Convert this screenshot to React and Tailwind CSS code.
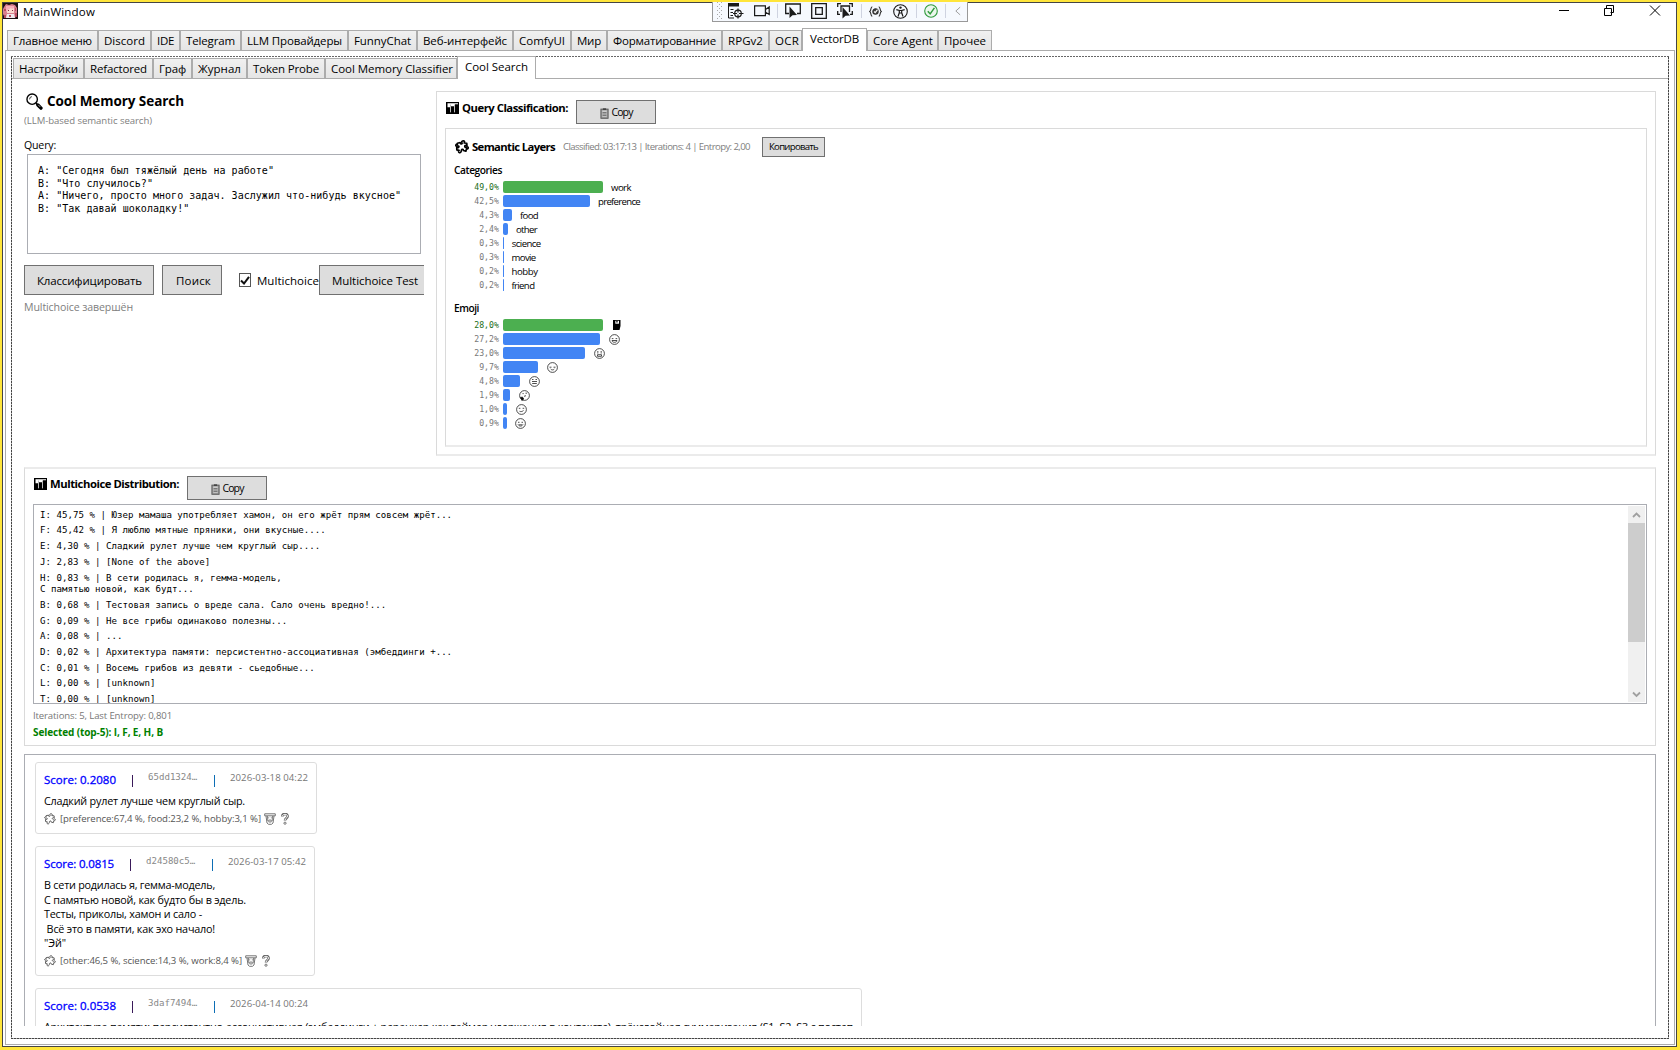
import { useLayoutEffect, useRef } from "react";

/* Text line that spreads its letters so that it fills exactly w pixels. */
function Fit({ w, className = "", children }) {
  const ref = useRef(null);
  useLayoutEffect(() => {
    const el = ref.current;
    el.style.letterSpacing = "0px";
    const natural = el.getBoundingClientRect().width;
    const n = el.textContent.length;
    el.style.letterSpacing = `${(w - natural) / n}px`;
  }, [w, children]);
  return (
    <span className={`shrink-0 block whitespace-pre ${className}`} style={{ width: w }}>
      <span ref={ref} className="inline-block">{children}</span>
    </span>
  );
}

const MONO = "font-['DejaVu_Sans_Mono',monospace]";

function AppIcon() {
  return (
    <svg width="15" height="16" viewBox="0 0 15 16">
      <rect width="15" height="16" fill="#1b1012" />
      <path d="M1 4 3 1l3 1 3-1 3 1 2 3v7l-2 3H2L0 11V6z" fill="#d9808f" />
      <path d="M4 5h7v5H4z" fill="#fbd9cf" />
      <path d="M3 3h8v2l-2 1-1-1-3 2-2 2z" fill="#f6adb8" />
      <path d="M5 7h1v1H5zM9 7h1v1H9z" fill="#7c2b3e" />
      <path d="M4 11h7l1 4H3z" fill="#efe9ee" />
      <path d="M6 12h2v2H6zM1 12h2v3H1zM12 10h2v4h-2zM1 6h2v2H1zM12 5h1v3h-1z" fill="#b84b60" />
    </svg>
  );
}

function SearchIcon() {
  return (
    <svg width="17" height="17" viewBox="0 0 16 16" fill="none" stroke="#000">
      <circle cx="5.800" cy="5.800" r="4.900" strokeWidth="1.300" />
      <path d="M3.400 6a2.400 2.400 0 0 1 2.200-2.600" strokeWidth=".7" />
      <path d="m9.300 9.500 1.500 1.600" strokeWidth="1.500" />
      <path d="m11.200 11.300 2.900 2.900" strokeWidth="3.200" strokeLinecap="round" />
      <path d="m11.600 11.200 1.800 1.900" stroke="#fff" strokeWidth=".6" />
    </svg>
  );
}

function ChartIcon() {
  return (
    <svg width="13" height="12" viewBox="0 0 13 12">
      <rect width="13" height="12" fill="#000" />
      <path d="M1.500 1.200H12v1H9v8H8v-6H5v6H4v-5H1.500z" fill="#fff" />
      <path d="M4 2.500h1v7.500H4zM8 2.500h1v7.500H8z" fill="#bbb" />
    </svg>
  );
}

function ClipIcon() {
  return (
    <svg width="9" height="11" viewBox="0 0 9 11">
      <rect x=".9" y="1.100" width="7.200" height="9.200" fill="#999" stroke="#555" strokeWidth=".9" />
      <rect x="2.200" y="2.500" width="4.600" height="6.300" fill="#ccc" />
      <path d="M2.500 4.500h4M2.500 6h4M2.500 7.500h4" stroke="#555" strokeWidth=".7" />
      <rect x="2.900" y=".3" width="3.200" height="1.700" fill="#444" />
    </svg>
  );
}

function PuzzleIcon({ size, sw }) {
  return (
    <svg width={size} height={size} viewBox="0 0 14 14" fill="none" stroke="currentColor" strokeWidth={sw} strokeLinejoin="round">
      <path d="M2.400 3.200 5.200 2.500c-.2 1.700 1.600 2 2 .8C6.500 2 6.600.9 8.200.8c1.500 0 1.700 1.400.9 2.200l2.700.3.200 2.300c-1.500-.6-2.500.1-2.200 1.100.3.900 1.500.7 2.200.2 1-.2 1.500.6 1.200 1.300-.3.800-1.200.8-1.700.6l-.6 2.500-2.500-.7c.2-1.500-1.600-1.900-2-.5-.1 1.500-.7 2.900-2 2.600-1.200-.3-1.100-1.600-.3-2.300l-2.300-.5-.1-2.400c1.400.5 2.500-.2 2.200-1.100-.4-.9-1.500-.5-2.100-.2-.9.200-1.200-.6-1-1.200.3-.6 1-.7 1.600-.4z" />
    </svg>
  );
}

function BearIcon() {
  return (
    <svg width="12" height="12" viewBox="0 0 12 12" fill="none" stroke="#666" strokeWidth=".9">
      <path d="M.7.8h10.600v2H.7zM2 3l1 7 1.500 1.300h3L9 10l1-7" />
      <path d="M4.200 4.800h1M6.800 4.800h1M4.800 7h2.400v2H4.800zM3.400 3l.4 5M8.600 3l-.4 5" strokeWidth=".8" />
    </svg>
  );
}

function QuestionIcon() {
  return (
    <svg width="8" height="12" viewBox="0 0 8 12" fill="none">
      <path d="M1.300 3.600C1.300 0 6.600 0 6.600 3.200c0 2-2.600 2-2.600 4.300" stroke="#666" strokeWidth="2.600" />
      <path d="M1.300 3.200C1.700.8 6.500.7 6.500 3.200c0 1.800-2.500 2-2.500 3.900" stroke="#fff" strokeWidth="1" />
      <circle cx="4" cy="10.200" r="1.100" stroke="#666" strokeWidth=".9" />
    </svg>
  );
}

const FACES = {
  happy: "M2.800 4.600h1.600M6.600 4.600h1.600M3 6.500h5c0 2.400-5 2.400-5 0z",
  weary: "M3 3.800h1.500M6.500 3.800H8M3.300 5h1M6.700 5h1M3.500 8.300V6.700h4v1.600z",
  calm: "M2.500 5.200h2M6.500 5.200h2M3.700 7c1 1.200 2.600 1.200 3.600 0",
  grin: "M3 3.500h1.500M6.500 3.500H8M3 5.500h5M3.200 7.500h4.600",
  think: "M3.500 3.600h1.200M6.500 3.200H8M5 6.300l2-.6M2 7.500l1 2 2-1",
  smirk: "M2.800 4.300h1.600M6.600 4.300h1.600M3.500 7.300c1.500.6 3 .2 4-.8",
  smile: "M3 4.300h1.500M6.500 4.300H8M3 6.400c1 2.200 4 2.200 5 0M4 6.800h3",
};

function Face({ kind }) {
  if (kind === "disk")
    return (
      <svg width="9" height="11" viewBox="0 0 9 11">
        <path d="M1 0h7.500v6l-1 4H1z" fill="#000" />
        <path d="M3.300 .8h3.700v2.900H3.300z" fill="#fff" />
        <path d="M4.300 .8h1.300v1.700H4.300z" fill="#000" />
      </svg>
    );
  return (
    <svg width="11" height="11" viewBox="0 0 11 11" fill="none" stroke="#222" strokeWidth=".8">
      <circle cx="5.500" cy="5.500" r="4.900" />
      <path d={FACES[kind]} />
      {kind === "think" && <path d="M1.500 7.500 3.500 7l1 2-1.500 1.500z" fill="#000" />}
    </svg>
  );
}

function Sep() {
  return <span className="block h-[14px] w-px bg-[#cfd3e0]" />;
}

function DebugBar() {
  return (
    <div className="absolute left-[712px] top-0 flex h-[22px] w-[256px] items-center border border-[#999] bg-[#f6f9fe] text-[#1a1a1a]">
      <svg className="ml-[4px]" width="5" height="18" viewBox="0 0 5 18" fill="#a9a9a9">
        {[0, 4, 8, 12, 16].map((y) => (
          <path key={y} d={`M0 ${y}h1v1H0zM4 ${y}h1v1H4zM2 ${y + 2}h1v1H2z`} />
        ))}
      </svg>
      <svg className="ml-[6px]" width="16" height="16" viewBox="0 0 16 16" fill="none" stroke="currentColor">
        <path d="M0 0h11v3.500H0z" fill="currentColor" stroke="none" />
        <path d="M.5 3v12H6M2.500 6.500h3M2.500 9.500H5M2.500 12.500H5" />
        <circle cx="10" cy="10.500" r="3.300" strokeWidth="1.200" />
        <path d="M10 5.500v4M10 11.500v4M5 10.500h4M11 10.500h4.500" strokeWidth="1.200" />
      </svg>
      <svg className="ml-[10px]" width="16" height="12" viewBox="0 0 16 12" fill="none" stroke="currentColor" strokeWidth="1.200">
        <path d="M.6.8h10.800v9.800H.6zM11.500 4.500 15.200 2v7.500l-3.700-2.300z" />
      </svg>
      <span className="ml-[7px]"><Sep /></span>
      <svg className="ml-[7px]" width="16" height="16" viewBox="0 0 16 16" fill="none" stroke="currentColor" strokeWidth="1.300">
        <path d="M4 10.500H.7V1h14.600v9.500H12" />
        <path d="M4.500 3.500v11.500l3-2.700 4.500-.3z" fill="currentColor" stroke="none" />
      </svg>
      <svg className="ml-[10px]" width="16" height="16" viewBox="0 0 16 16" fill="none" stroke="currentColor" strokeWidth="1.300">
        <path d="M.7.7h14.600v14.600H.7zM4.700 4.700h6.600v6.600H4.700z" />
      </svg>
      <svg className="ml-[10px]" width="16" height="16" viewBox="0 0 16 16" fill="none" stroke="currentColor" strokeWidth="1.300">
        <path d="M.7 4V.7H4M12 .7h3.300V4M.7 8v3.300H3M13 11.300h2.300V8M4 9V3h8.500v6" />
        <path d="M5.500 4v11.500l3-2.700 4.500-.3z" fill="currentColor" stroke="none" />
      </svg>
      <span className="ml-[8px]"><Sep /></span>
      <svg className="ml-[7px]" width="13" height="11" viewBox="0 0 14 12" fill="none" stroke="#333" strokeWidth="1.200">
        <path d="M3.500.8C1.500.8 2.500 5 .7 6c1.800 1 .8 5.200 2.800 5.200M10.500.8c2 0 1 4.200 2.800 5.200-1.800 1-.8 5.200-2.800 5.200" />
        <circle cx="7" cy="6" r="2.900" fill="#444" stroke="#333" />
        <path d="m5.500 6 1.200 1.200L9.200 4" stroke="#fff" />
      </svg>
      <svg className="ml-[11px]" width="15" height="15" viewBox="0 0 15 15" fill="none" stroke="currentColor" strokeWidth="1.100">
        <circle cx="7.500" cy="7.500" r="6.800" />
        <circle cx="7.500" cy="3.600" r="1.200" fill="currentColor" stroke="none" />
        <path d="M3.300 5.700 6.300 6.500v2.300L5 12.500M11.700 5.700l-3 .8v2.300L10 12.500M6.500 6.500h2M6.400 9h2.200" strokeWidth="1.200" />
      </svg>
      <span className="ml-[8px]"><Sep /></span>
      <svg className="ml-[7px]" width="14" height="14" viewBox="0 0 14 14" fill="none" stroke="#2f9a3c">
        <circle cx="7" cy="7" r="6.300" fill="#eaf6ec" strokeWidth="1.100" />
        <path d="m3.800 7.200 2.400 2.700 4.200-6" strokeWidth="1.500" />
      </svg>
      <span className="ml-[7px]"><Sep /></span>
      <svg className="ml-[9px]" width="6" height="10" viewBox="0 0 7 10" fill="none" stroke="#999" strokeWidth="1.100">
        <path d="M6 .5 1 5l5 4.500" />
      </svg>
    </div>
  );
}

function Tab({ w, label, selected, tw }) {
  return selected ? (
    <div className="z-10 -mt-[2px] flex h-[23px] shrink-0 items-center border border-b-0 border-[#acacac] bg-white pb-[2px] pl-[7px]" style={{ width: w }}>
      <Fit w={tw}>{label}</Fit>
    </div>
  ) : (
    <div className="flex h-[20px] shrink-0 items-center border border-b-0 border-[#acacac] bg-linear-to-b from-[#f0f0f0] to-[#e5e5e5] pl-[5px] pt-px" style={{ width: w }}>
      <Fit w={tw ?? w - 12}>{label}</Fit>
    </div>
  );
}

function Btn({ className, children }) {
  return <div className={`flex shrink-0 items-center border border-[#707070] bg-[#ddd] ${className}`}>{children}</div>;
}

function CopyBtn() {
  return (
    <Btn className="h-[24px] w-[80px] justify-center gap-[3px] pt-[2px] text-[10.500px]">
      <ClipIcon />
      <Fit w={21}>Copy</Fit>
    </Btn>
  );
}

function BarRow({ pct, bar, top, children }) {
  return (
    <div className="flex h-[14px] items-center">
      <span className={`w-[45px] text-right text-[8.200px] tracking-[0.030px] leading-[14px] ${MONO} ${top ? "text-[#1b6e20]" : "text-[#777]"}`}>{pct}</span>
      <span className={`ml-[4px] h-[12px] shrink-0 rounded-[2px] ${top ? "bg-[#4caf50]" : "bg-[#4285f4]"}`} style={{ width: bar }} />
      {children}
    </div>
  );
}

const CATEGORIES = [
  ["49,0%", 100, "work", 20],
  ["42,5%", 87, "preference", 42],
  ["4,3%", 9, "food", 18],
  ["2,4%", 5, "other", 21],
  ["0,3%", 0.7, "science", 29],
  ["0,3%", 0.6, "movie", 24],
  ["0,2%", 0.5, "hobby", 26],
  ["0,2%", 0.4, "friend", 23],
];

const EMOJI = [
  ["28,0%", 100, "disk"],
  ["27,2%", 97.3, "happy"],
  ["23,0%", 82, "weary"],
  ["9,7%", 35, "calm"],
  ["4,8%", 17, "grin"],
  ["1,9%", 7, "think"],
  ["1,0%", 4, "smirk"],
  ["0,9%", 3.500, "smile"],
];

const CHOICES = [
  "I: 45,75 % | Юзер мамаша употребляет хамон, он его жрёт прям совсем жрёт...",
  "F: 45,42 % | Я люблю мятные пряники, они вкусные....",
  "E: 4,30 % | Сладкий рулет лучше чем круглый сыр....",
  "J: 2,83 % | [None of the above]",
  "H: 0,83 % | В сети родилась я, гемма-модель,\nС памятью новой, как будт...",
  "B: 0,68 % | Тестовая запись о вреде сала. Сало очень вредно!...",
  "G: 0,09 % | Не все грибы одинаково полезны...",
  "A: 0,08 % | ...",
  "D: 0,02 % | Архитектура памяти: персистентно-ассоциативная (эмбеддинги +...",
  "C: 0,01 % | Восемь грибов из девяти - сьедобные...",
  "L: 0,00 % | [unknown]",
  "T: 0,00 % | [unknown]",
];

const OUTER_TABS = [
  ["Главное меню", 91],
  ["Discord", 53],
  ["IDE", 29],
  ["Telegram", 61],
  ["LLM Провайдеры", 107],
  ["FunnyChat", 69],
  ["Веб-интерфейс", 96],
  ["ComfyUI", 58],
  ["Мир", 36],
  ["Форматированние", 115],
  ["RPGv2", 47],
  ["OCR", 33, false, 24],
  ["VectorDB", 65, true, 49],
  ["Core Agent", 71, false, 60],
  ["Прочее", 54],
];

const INNER_TABS = [
  ["Настройки", 71],
  ["Refactored", 69],
  ["Граф", 39],
  ["Журнал", 55],
  ["Token Probe", 78],
  ["Cool Memory Classifier", 132, false, 122],
  ["Cool Search", 79, true, 63],
];

function Card({ w, h, score, scoreW, id, date, lines, meta, metaW }) {
  return (
    <div className="shrink-0 rounded-[3px] border border-[#ddd] pl-[8px] pt-[7px]" style={{ width: w, height: h }}>
      <div className="flex h-[20px] text-[11.500px] leading-[19px]">
        <Fit w={scoreW} className="text-[#0000ff] [-webkit-text-stroke:0.300px_#0000ff]">{score}</Fit>
        <span className="ml-[16px] mt-[5px] h-[12px] w-px bg-[#3a1a5a]" />
        <span className={`ml-[15px] w-[50px] text-[9.100px] leading-[14px] text-[#888] ${MONO}`}>{id}</span>
        <span className="ml-[16px] mt-[5px] h-[12px] w-px bg-[#0d6eb5]" />
        <Fit w={78} className="ml-[15px] text-[9.600px] leading-[16px] text-[#777]">{date}</Fit>
      </div>
      <div className="pt-[4px] text-[10.800px] leading-[14.500px]">
        {lines.map(([t, lw]) => <Fit key={t} w={lw}>{t}</Fit>)}
      </div>
      {meta && (
        <div className="mt-[2px] flex h-[17px] items-center text-[#555]">
          <PuzzleIcon size={12} sw={1.100} />
          <Fit w={metaW} className="ml-[4px] text-[9.600px]">{meta}</Fit>
          <span className="ml-[3px]"><BearIcon /></span>
          <span className="ml-[5px]"><QuestionIcon /></span>
        </div>
      )}
    </div>
  );
}

export default function App() {
  return (
    <div className="relative h-[1050px] w-[1680px] overflow-hidden border-2 border-b-[3px] border-r-[3px] border-[#ffe53b] bg-white font-['Open_Sans','Noto_Sans',sans-serif] text-[11.500px] text-black">
      <div className="flex h-full flex-col border border-[#444]">
        <div className="flex h-[27px] shrink-0 items-start">
          <AppIcon />
          <Fit w={72} className="ml-[5px] leading-[18px]">MainWindow</Fit>
          <svg className="ml-auto mr-[15px] mt-[2px]" width="102" height="11" viewBox="0 0 102 11" fill="none" stroke="#000">
            <path d="M0 5.500h10M45.500 3.500h7v7h-7zM47.500 3.500v-3h7v7h-3M91 .5l10 10M101 .5l-10 10" />
          </svg>
        </div>

        <div className="z-10 ml-[4px] flex h-[20px] shrink-0">
          {OUTER_TABS.map(([l, w, s, tw]) => <Tab key={l} label={l} w={w} selected={s} tw={tw} />)}
        </div>

        <div className="ml-[2px] mr-[1px] flex h-[995px] shrink-0 flex-col border border-[#acacac] p-[5px]">
          <div className="h-px shrink-0 bg-[repeating-linear-gradient(90deg,#666_0_2px,#fff_2px_3px)]" />
          <div className="flex h-[981px] shrink-0">
            <div className="w-px bg-[repeating-linear-gradient(180deg,#444_0_2px,#bbb_2px_3px)]" />
            <div className="flex min-w-0 flex-1 flex-col">
              <div className="z-10 ml-[1px] mt-px flex h-[20px] shrink-0">
                {INNER_TABS.map(([l, w, s, tw]) => <Tab key={l} label={l} w={w} selected={s} tw={tw} />)}
              </div>
              <div className="flex h-[948px] shrink-0 flex-col overflow-hidden border-t border-[#acacac] pl-[12px] pr-[12px] pt-[12px]">
                <div className="flex h-[376px] shrink-0 items-start">
                  <div className="w-[400px] shrink-0 overflow-hidden">
                    <div className="flex h-[19px] items-center pl-[2px] pt-px">
                      <span className="pt-px"><SearchIcon /></span>
                      <Fit w={137} className="ml-[4px] text-[13.500px] font-bold">Cool Memory Search</Fit>
                    </div>
                    <Fit w={128} className="text-[9.600px] leading-[22px] text-[#808080]">(LLM-based semantic search)</Fit>
                    <Fit w={32} className="mt-[4px] text-[10.600px] leading-[18px]">Query:</Fit>
                    <div className={`ml-[3px] h-[100px] w-[394px] whitespace-pre border border-[#abadb3] pl-[10px] pt-[10px] text-[10px] leading-[12.600px] tracking-[0.030px] ${MONO}`}>
                      {'A: "Сегодня был тяжёлый день на работе"\nB: "Что случилось?"\nA: "Ничего, просто много задач. Заслужил что-нибудь вкусное"\nB: "Так давай шоколадку!"'}
                    </div>
                    <div className="mt-[11px] flex h-[30px] items-center">
                      <Btn className="h-[30px] w-[130px] pl-[12px] pt-px"><Fit w={105}>Классифицировать</Fit></Btn>
                      <Btn className="ml-[8px] h-[30px] w-[60px] pl-[13px] pt-px"><Fit w={35}>Поиск</Fit></Btn>
                      <span className="ml-[17px] flex h-[14px] w-[14px] items-center justify-center border border-[#555] bg-white">
                        <svg width="10" height="9" viewBox="0 0 10 9" fill="none" stroke="#111" strokeWidth="2"><path d="m1 4.500 3 3L9 .8" /></svg>
                      </span>
                      <Fit w={62} className="ml-[6px] pt-px">Multichoice</Fit>
                      <Btn className="h-[30px] w-[112px] pl-[12px] pt-px"><Fit w={86}>Multichoice Test</Fit></Btn>
                    </div>
                    <Fit w={109} className="text-[10.600px] leading-[24px] text-[#808080]">Multichoice завершён</Fit>
                  </div>

                  <div className="ml-[12px] flex h-[365px] w-[1220px] flex-col border border-b-2 border-[#dadada] border-b-[#ebebeb] px-[8px]">
                    <div className="flex h-[36px] items-start pt-[8px]">
                      <span className="ml-px mt-[2px]"><ChartIcon /></span>
                      <Fit w={106} className="ml-[3px] mr-px text-[11.300px] font-bold leading-[15px]">Query Classification:</Fit>
                      <span className="ml-[7px]"><CopyBtn /></span>
                    </div>
                    <div className="h-[319px] border border-b-2 border-[#dadada] border-b-[#ebebeb] pl-[8px]">
                      <div className="mt-[8px] flex h-[20px] items-center">
                        <span className="ml-px"><PuzzleIcon size={14} sw={1.600} /></span>
                        <Fit w={83} className="ml-[3px] text-[11.300px] font-bold">Semantic Layers</Fit>
                        <Fit w={187} className="ml-[8px] pt-px text-[9.600px] text-[#808080]">Classified: 03:17:13 | Iterations: 4 | Entropy: 2,00</Fit>
                        <Btn className="ml-[12px] h-[20px] w-[63px] pl-[6px] pt-px text-[9.600px]"><Fit w={49}>Копировать</Fit></Btn>
                      </div>
                      <Fit w={48} className="mt-[5px] text-[10.200px] font-semibold leading-[16px]">Categories</Fit>
                      <div className="mt-[2px]">
                        {CATEGORIES.map(([p, b, l, lw], i) => (
                          <BarRow key={l} pct={p} bar={b} top={i === 0}>
                            <Fit w={lw} className="ml-[8px] pt-px text-[9.600px] leading-[13px]">{l}</Fit>
                          </BarRow>
                        ))}
                      </div>
                      <Fit w={25} className="mt-[8px] text-[10.200px] font-semibold leading-[16px]">Emoji</Fit>
                      <div className="mt-[2px]">
                        {EMOJI.map(([p, b, k], i) => (
                          <BarRow key={k} pct={p} bar={b} top={i === 0}>
                            <span className="ml-[8.500px]"><Face kind={k} /></span>
                          </BarRow>
                        ))}
                      </div>
                    </div>
                  </div>
                </div>

                <div className="h-[279px] w-[1632px] shrink-0 border border-t-2 border-[#dadada] border-t-[#ebebeb] px-[8px]">
                  <div className="flex h-[35px] items-start pt-[7px]">
                    <span className="ml-px mt-[2px]"><ChartIcon /></span>
                    <Fit w={129} className="ml-[3px] mr-px text-[11.300px] font-bold leading-[15px]">Multichoice Distribution:</Fit>
                    <span className="ml-[7px]"><CopyBtn /></span>
                  </div>
                  <div className="flex h-[200px] w-[1614px] justify-between overflow-hidden border border-[#abadb3] p-px">
                    <div className={`whitespace-pre pl-[5px] pt-[1.700px] text-[9.100px] leading-[11.700px] tracking-[0.020px] ${MONO}`}>
                      {CHOICES.map((c) => <div key={c} className="py-[2px]">{c}</div>)}
                    </div>
                    <div className="flex h-[196px] w-[17px] flex-col items-center bg-[#f0f0f0]">
                      <svg className="shrink-0" width="17" height="17" viewBox="0 0 17 17" fill="none" stroke="#a0a0a0" strokeWidth="1.800"><path d="m5 11 3.500-3.500L12 11" /></svg>
                      <div className="h-[119px] w-full bg-[#cdcdcd]" />
                      <svg className="mt-auto shrink-0" width="17" height="17" viewBox="0 0 17 17" fill="none" stroke="#a0a0a0" strokeWidth="1.800"><path d="m5 7.500 3.500 3.500L12 7.500" /></svg>
                    </div>
                  </div>
                  <Fit w={139} className="mt-[3px] text-[9.600px] leading-[17px] text-[#777]">Iterations: 5, Last Entropy: 0,801</Fit>
                  <Fit w={130} className="mt-px text-[10px] font-bold leading-[15px] text-[#008000]">Selected (top-5): I, F, E, H, B</Fit>
                </div>

                <div className="mt-[8px] flex h-[300px] w-[1632px] shrink-0 flex-col gap-[12px] border border-[#abadb3] pl-[10px] pt-[7px]">
                  <Card w={282} h={72} score="Score: 0.2080" scoreW={72} id="65dd1324…" date="2026-03-18 04:22"
                    lines={[["Сладкий рулет лучше чем круглый сыр.", 201]]}
                    meta="[preference:67,4 %, food:23,2 %, hobby:3,1 %]" metaW={201} />
                  <Card w={280} h={130} score="Score: 0.0815" scoreW={70} id="d24580c5…" date="2026-03-17 05:42"
                    lines={[["В сети родилась я, гемма-модель,", 171], ["С памятью новой, как будто бы в эдель.", 202], ["Тесты, приколы, хамон и сало -", 158], [" Всё это в памяти, как эхо начало!", 171], ['"Эй"', 22]]}
                    meta="[other:46,5 %, science:14,3 %, work:8,4 %]" metaW={182} />
                  <Card w={827} h={100} score="Score: 0.0538" scoreW={72} id="3daf7494…" date="2026-04-14 00:24"
                    lines={[["Архитектура памяти: персистентно-ассоциативная (эмбеддинги + реранкер как таймер удержания в контексте), трёхслойная суммаризация (S1, S2, S3 с постеп", 809]]} />
                </div>
              </div>
            </div>
            <div className="w-px bg-[repeating-linear-gradient(180deg,#444_0_2px,#bbb_2px_3px)]" />
          </div>
          <div className="h-px shrink-0 bg-[repeating-linear-gradient(90deg,#444_0_2px,#aaa_2px_3px)]" />
        </div>
      </div>
      <div className="absolute -left-[2px] -top-[2px]"><DebugBar /></div>
    </div>
  );
}
